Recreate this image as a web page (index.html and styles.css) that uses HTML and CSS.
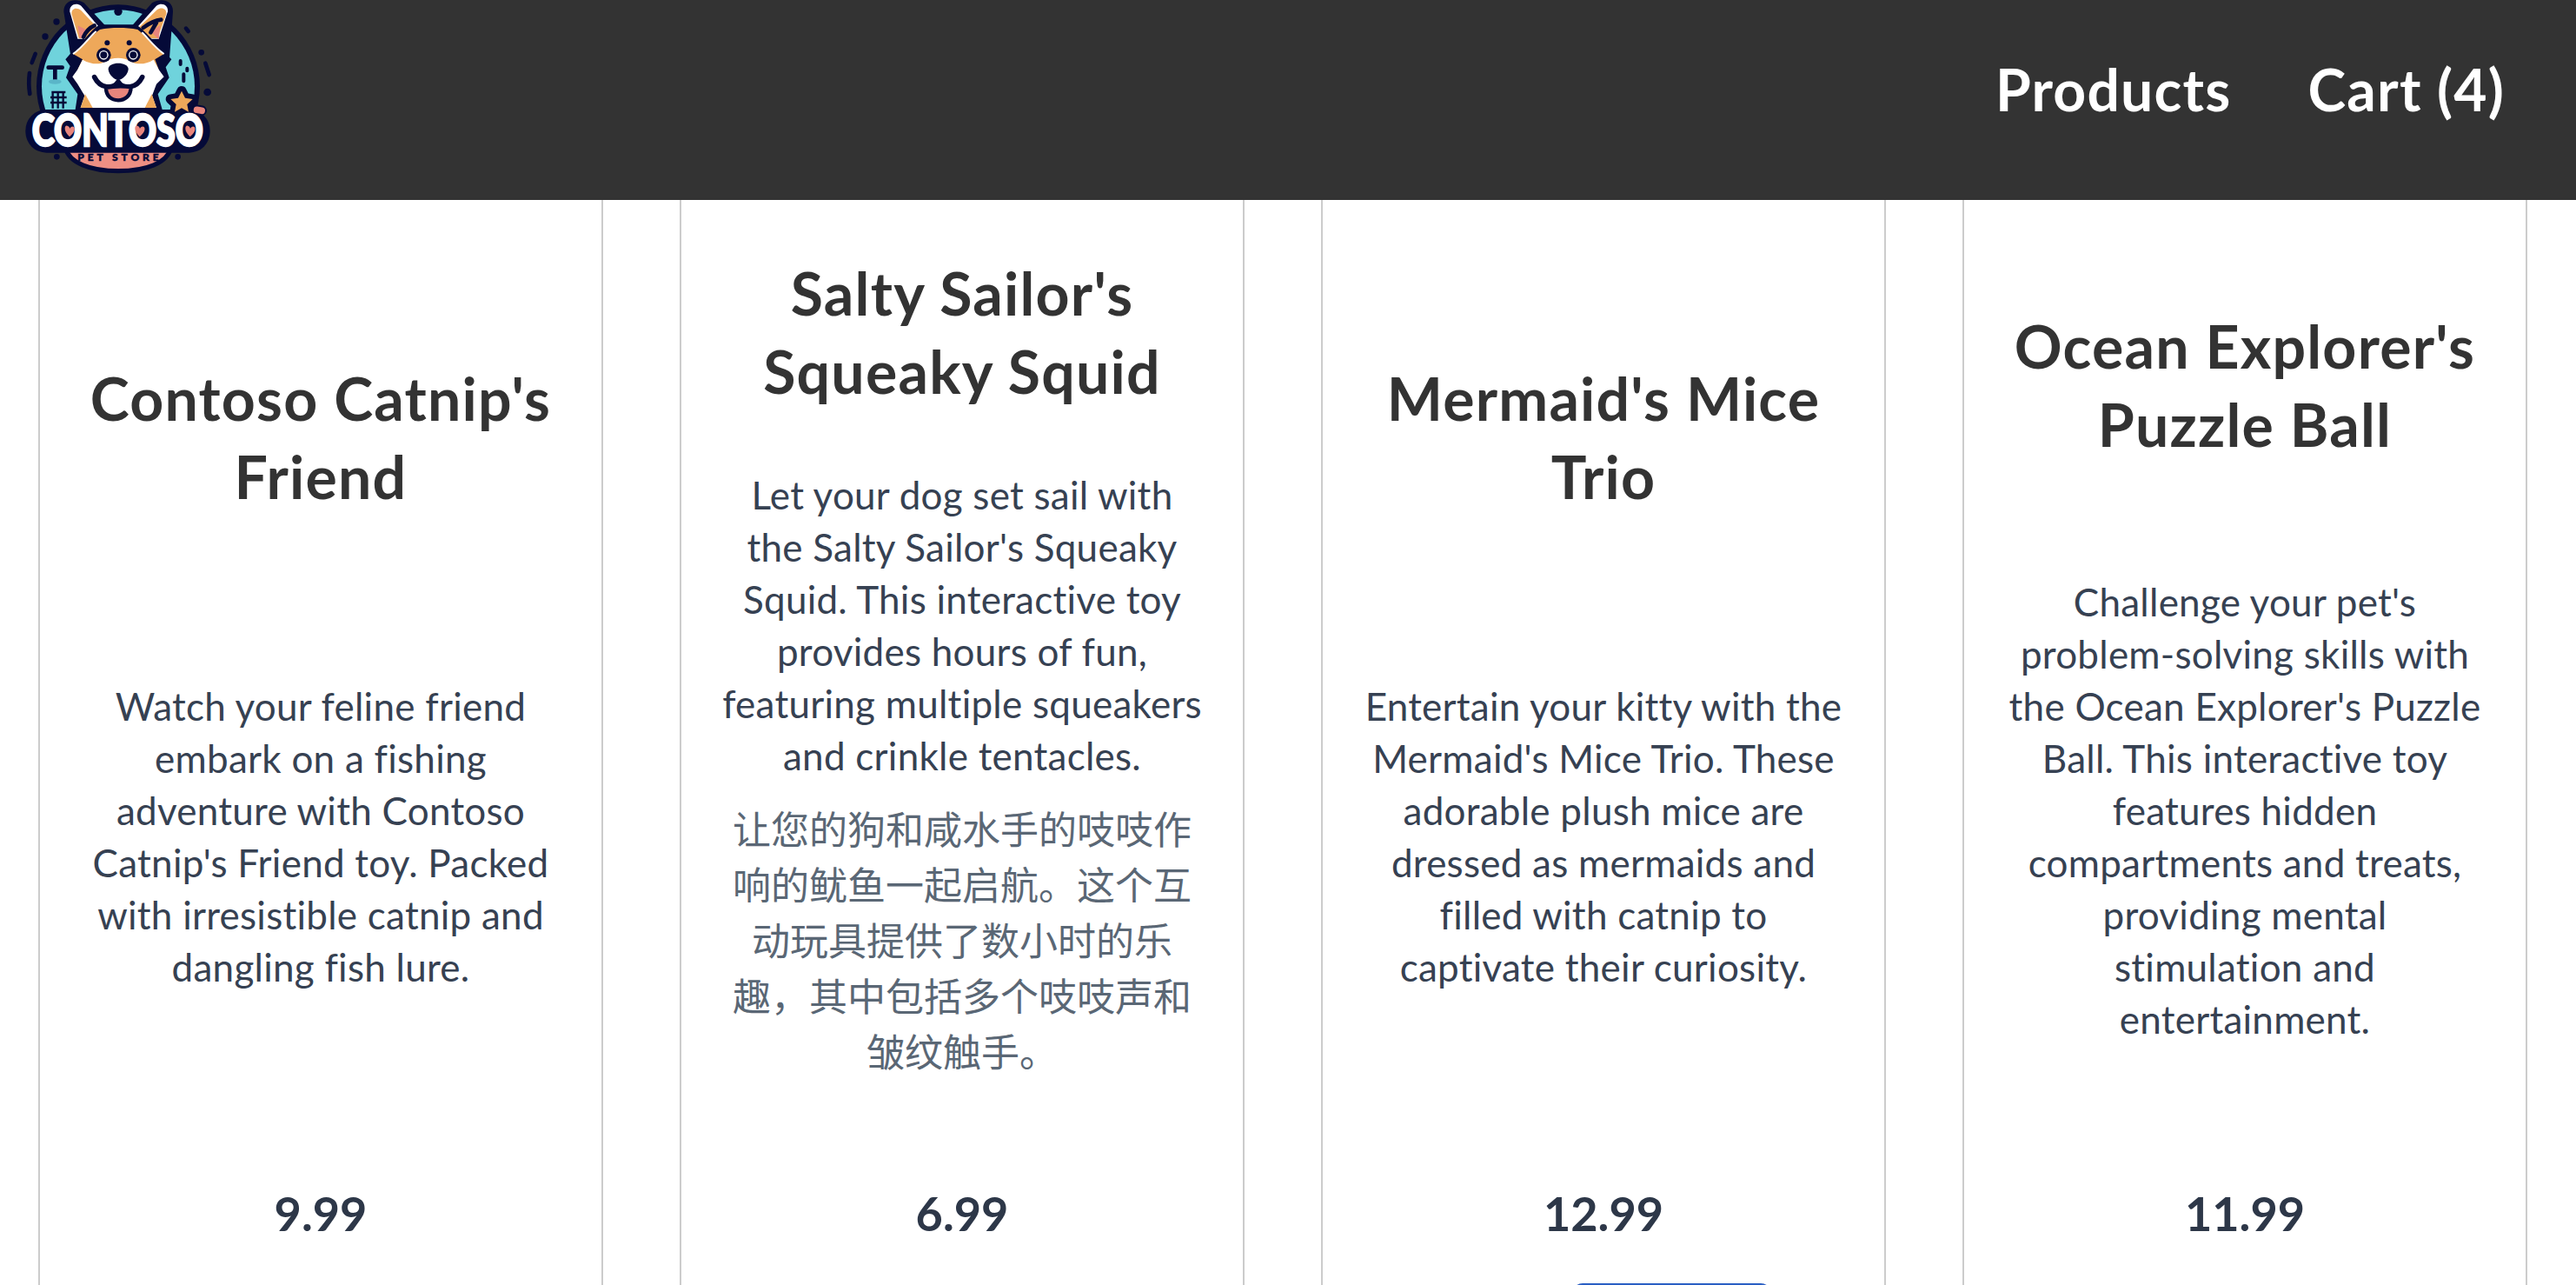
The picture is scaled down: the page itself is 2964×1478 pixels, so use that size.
FILE: index.html
```html
<!DOCTYPE html>
<html lang="en">
<head>
<meta charset="utf-8">
<title>Contoso Pet Store</title>
<link rel="stylesheet" href="styles.css">
</head>
<body>
<header class="site-header">
  <svg class="logo" viewBox="0 0 900 690" aria-label="Contoso Pet Store logo">
    <!-- badge disc -->
    <circle class="ink-fill" cx="408" cy="298" r="282"/>
    <circle class="sky" cx="408" cy="298" r="264"/>
    <circle class="ink-fill" cx="408" cy="40" r="14"/>
    <!-- dots and dashes around the disc -->
    <g class="ink-fill">
      <circle cx="195" cy="75" r="11"/><circle cx="156" cy="126" r="11"/>
      <circle cx="695" cy="181" r="10"/><circle cx="716" cy="318" r="13"/>
      <circle cx="196" cy="541" r="10"/><circle cx="614" cy="541" r="10"/>
    </g>
    <g class="ink-line">
      <path d="M642 98 L650 108"/><path d="M122 186 L110 216"/><path d="M102 252 C99 275 99 300 103 324"/><path d="M709 218 L722 258"/>
      <path class="dash" d="M623 210 V222 M646 236 V244 M634 256 V280"/>
    </g>
    <!-- lamp and building -->
    <path class="ink-line" d="M167 233 H215 M190 233 V274"/>
    <ellipse class="shade" cx="190" cy="282" rx="22" ry="8"/>
    <path class="ink-line grid" d="M178 318 H226 M174 336 H230 M174 354 H230 M182 314 V374 M200 314 V374 M218 314 V374"/>
    <!-- ears -->
    <path class="ink-fill" d="M245 200 L220 40 C220 0 262 -8 290 10 L370 95 L450 95 L525 10 C555 -8 598 0 597 40 L585 200 Z"/>
    <path class="white" d="M268 134 L241 40 C239 16 262 8 280 20 L346 98 L310 134 Z"/>
    <path class="white" d="M548 134 L579 40 C581 16 558 8 540 20 L474 94 L508 134 Z"/>
    <path class="tan" d="M272 132 L247 48 C246 28 265 24 280 36 L342 102 L310 132 Z"/>
    <path class="tan" d="M544 132 L574 48 C575 28 556 24 542 34 L478 96 L506 132 Z"/>
    <path class="pink" d="M268 88 L276 134 L304 106 Z"/>
    <path class="pink" d="M553 86 L548 136 L522 110 Z"/>
    <path class="ink-line" d="M326 88 C310 95 296 110 288 128"/>
    <path class="ink-line" d="M494 96 C510 84 535 70 556 68 M540 78 L520 112"/>
    <!-- head -->
    <path class="ink-fill" d="M260 378 L268 325 L228 268 L242 228 L226 205 L252 175 C285 150 310 105 345 85 L470 85 C505 110 535 150 568 180 L592 205 L572 232 L584 268 L545 325 L560 378 Z"/>
    <path class="tan" d="M252 186 C285 165 315 120 345 102 C385 94 435 94 475 102 C505 125 535 165 566 186 L535 205 L548 240 L268 240 L285 205 Z"/>
    <path class="white" d="M250 265 L268 240 L285 206 C320 225 345 222 365 212 C385 196 430 196 450 212 C470 222 500 225 530 206 L548 240 L566 265 L540 290 L525 330 L540 372 L278 372 L292 330 L268 290 Z"/>
    <path class="tan" d="M278 372 L294 325 L320 372 Z"/>
    <path class="tan" d="M540 372 L524 325 L500 372 Z"/>
    <path class="white trim" d="M252 186 C285 165 315 120 332 108"/>
    <path class="white trim" d="M566 186 C535 165 505 125 490 112"/>
    <circle class="ink-fill" cx="370" cy="148" r="9"/><circle class="ink-fill" cx="446" cy="148" r="9"/>
    <circle class="ink-fill" cx="358" cy="190" r="25"/><circle class="white" cx="358" cy="190" r="16"/><circle class="ink-fill" cx="358" cy="190" r="12"/>
    <circle class="ink-fill" cx="460" cy="190" r="25"/><circle class="white" cx="460" cy="190" r="16"/><circle class="ink-fill" cx="460" cy="190" r="12"/>
    <path class="ink-fill" d="M374 238 C374 212 442 212 443 238 C443 258 420 276 408 276 C396 276 374 258 374 238 Z"/>
    <path class="ink-line smile" d="M326 266 C345 305 390 310 408 282 C426 310 472 305 491 266"/>
    <path class="pink tongue" d="M366 303 C390 298 430 298 452 300 C452 332 430 346 408 346 C385 346 366 332 366 303 Z"/>
    <!-- PET STORE banner -->
    <path class="salmon" d="M226 510 H590 C578 562 505 590 408 590 C312 590 238 562 226 510 Z"/>
    <!-- CONTOSO plate -->
    <rect class="ink-fill" x="88" y="378" width="637" height="149" rx="72"/>
    <!-- star and bone -->
    <path class="star-edge" d="M627 314 L639 338 L665 342 L646 360 L651 386 L627 373 L603 386 L608 360 L589 342 L615 338 Z"/>
    <path class="tan" d="M627 314 L639 338 L665 342 L646 360 L651 386 L627 373 L603 386 L608 360 L589 342 L615 338 Z"/>
    <rect class="pink bone" x="668" y="369" width="40" height="23" rx="11.5" transform="rotate(10 688 381)"/>
    <text class="logo-word" x="406" y="504" text-anchor="middle" textLength="592" lengthAdjust="spacingAndGlyphs">CONTOSO</text>
    <path class="pink" d="M240 472 C218 452 222 432 232 434 C238 435 240 440 241 444 C243 438 250 434 255 438 C262 446 254 460 240 472 Z"/>
    <path class="pink" d="M482 472 C460 452 464 432 474 434 C480 435 482 440 483 444 C485 438 492 434 497 438 C504 446 496 460 482 472 Z"/>
    <path class="pink" d="M656 472 C634 452 638 432 648 434 C654 435 656 440 657 444 C659 438 666 434 671 438 C678 446 670 460 656 472 Z"/>
    <text class="logo-sub" x="408" y="556" text-anchor="middle" textLength="280" lengthAdjust="spacing">PET STORE</text>
  </svg>
  <nav class="site-nav">
    <a class="nav-link" href="#products">Products</a>
    <a class="nav-link" href="#cart">Cart (4)</a>
  </nav>
</header>
<main class="product-list" id="products">
  <article class="card">
    <div class="card-body">
      <h2 class="card-title">Contoso Catnip's<br>Friend</h2>
      <div class="card-text"><p class="desc">Watch your feline friend<br>embark on a fishing<br>adventure with Contoso<br>Catnip's Friend toy. Packed<br>with irresistible catnip and<br>dangling fish lure.</p></div>
    </div>
    <p class="price">9.99</p>
  </article>
  <article class="card">
    <div class="card-body">
      <h2 class="card-title">Salty Sailor's<br>Squeaky Squid</h2>
      <div class="card-text">
        <p class="desc">Let your dog set sail with<br>the Salty Sailor's Squeaky<br>Squid. This interactive toy<br>provides hours of fun,<br>featuring multiple squeakers<br>and crinkle tentacles.</p>
        <p class="desc-cn">让您的狗和咸水手的吱吱作响的鱿鱼一起启航。这个互动玩具提供了数小时的乐趣，其中包括多个吱吱声和皱纹触手。</p>
      </div>
    </div>
    <p class="price">6.99</p>
  </article>
  <article class="card">
    <div class="card-body">
      <h2 class="card-title">Mermaid's Mice<br>Trio</h2>
      <div class="card-text"><p class="desc">Entertain your kitty with the<br>Mermaid's Mice Trio. These<br>adorable plush mice are<br>dressed as mermaids and<br>filled with catnip to<br>captivate their curiosity.</p></div>
    </div>
    <p class="price">12.99</p>
    <div class="action-bar"></div>
  </article>
  <article class="card">
    <div class="card-body">
      <h2 class="card-title">Ocean Explorer's<br>Puzzle Ball</h2>
      <div class="card-text"><p class="desc">Challenge your pet's<br>problem-solving skills with<br>the Ocean Explorer's Puzzle<br>Ball. This interactive toy<br>features hidden<br>compartments and treats,<br>providing mental<br>stimulation and<br>entertainment.</p></div>
    </div>
    <p class="price">11.99</p>
  </article>
</main>
</body>
</html>
```
FILE: styles.css
```css
* { box-sizing: border-box; }
html, body { margin: 0; height: 100%; overflow: hidden; background: #fff; }
body {
  display: flex;
  flex-direction: column;
  font-family: Lato, "Noto Sans CJK SC", sans-serif;
  font-variant-ligatures: none;
}

.site-header {
  position: relative;
  z-index: 1;
  flex: 0 0 230px;
  background: #333;
  display: flex;
  align-items: flex-start;
  justify-content: space-between;
  padding-right: 82px;
}
.logo { width: 300px; height: 230px; }
.ink-fill { fill: #050a38; }
.ink-line { fill: none; stroke: #050a38; stroke-width: 14; stroke-linecap: round; stroke-linejoin: round; }
.ink-line.grid { stroke-width: 7; stroke-linecap: butt; }
.ink-line.smile { stroke-width: 17; }
.dash { stroke-width: 12; }
.sky { fill: #6fd3dc; }
.shade { fill: #5ab5c8; }
.tan { fill: #eea85a; }
.pink { fill: #e8857c; }
.tongue { stroke: #050a38; stroke-width: 13; }
.bone { stroke: #050a38; stroke-width: 12; paint-order: stroke; }
.star-edge { fill: #050a38; stroke: #050a38; stroke-width: 34; stroke-linejoin: round; }
.salmon { fill: #ee8f84; stroke: #050a38; stroke-width: 16; }
.white { fill: #fff; }
.white.trim { fill: none; stroke: #fff; stroke-width: 6; }
.logo-word { font: 900 152px Lato, sans-serif; fill: #fff; stroke: #fff; stroke-width: 7; }
.logo-sub { font: 900 36px Lato, sans-serif; fill: #050a38; stroke: #050a38; stroke-width: 1.5; }

.site-nav { display: flex; gap: 88px; padding-top: 68px; }
.nav-link {
  color: #fff;
  font-size: 66px;
  line-height: 70px;
  font-weight: 700;
  letter-spacing: 1.2px;
  text-decoration: none;
  white-space: nowrap;
}

.product-list {
  flex: 1;
  min-height: 0;
  overflow: hidden;
  display: grid;
  grid-template-columns: repeat(4, 650px);
  column-gap: 88px;
  padding-left: 44px;
}
.card {
  height: 1300px;
  border: solid #ccc;
  border-width: 0 2px;
  padding: 0 42px;
  display: flex;
  flex-direction: column;
  text-align: center;
}
.card-body {
  flex: none;
  height: 1105px;
  margin-top: -5px;
  display: flex;
  flex-direction: column;
  justify-content: space-evenly;
}
.card-title {
  margin: 0;
  color: #333;
  font-size: 68px;
  line-height: 90px;
  font-weight: 700;
  letter-spacing: 1.2px;
}
.card-text { display: flow-root; }
.desc {
  margin: 0;
  color: #364152;
  font-size: 44px;
  line-height: 60px;
  letter-spacing: 0.25px;
}
.desc-cn { margin: 23px 0 21px; color: #5a6775; font-size: 44px; line-height: 64px; }
.price { margin: 28px 0 0; color: #2d3748; font-size: 54px; line-height: 76px; font-weight: 700; }
.action-bar {
  flex: none;
  align-self: flex-end;
  width: 229px;
  height: 30px;
  margin: 42px 88px 0 0;
  background: #2a5fc4;
  border-radius: 12px;
}
```
